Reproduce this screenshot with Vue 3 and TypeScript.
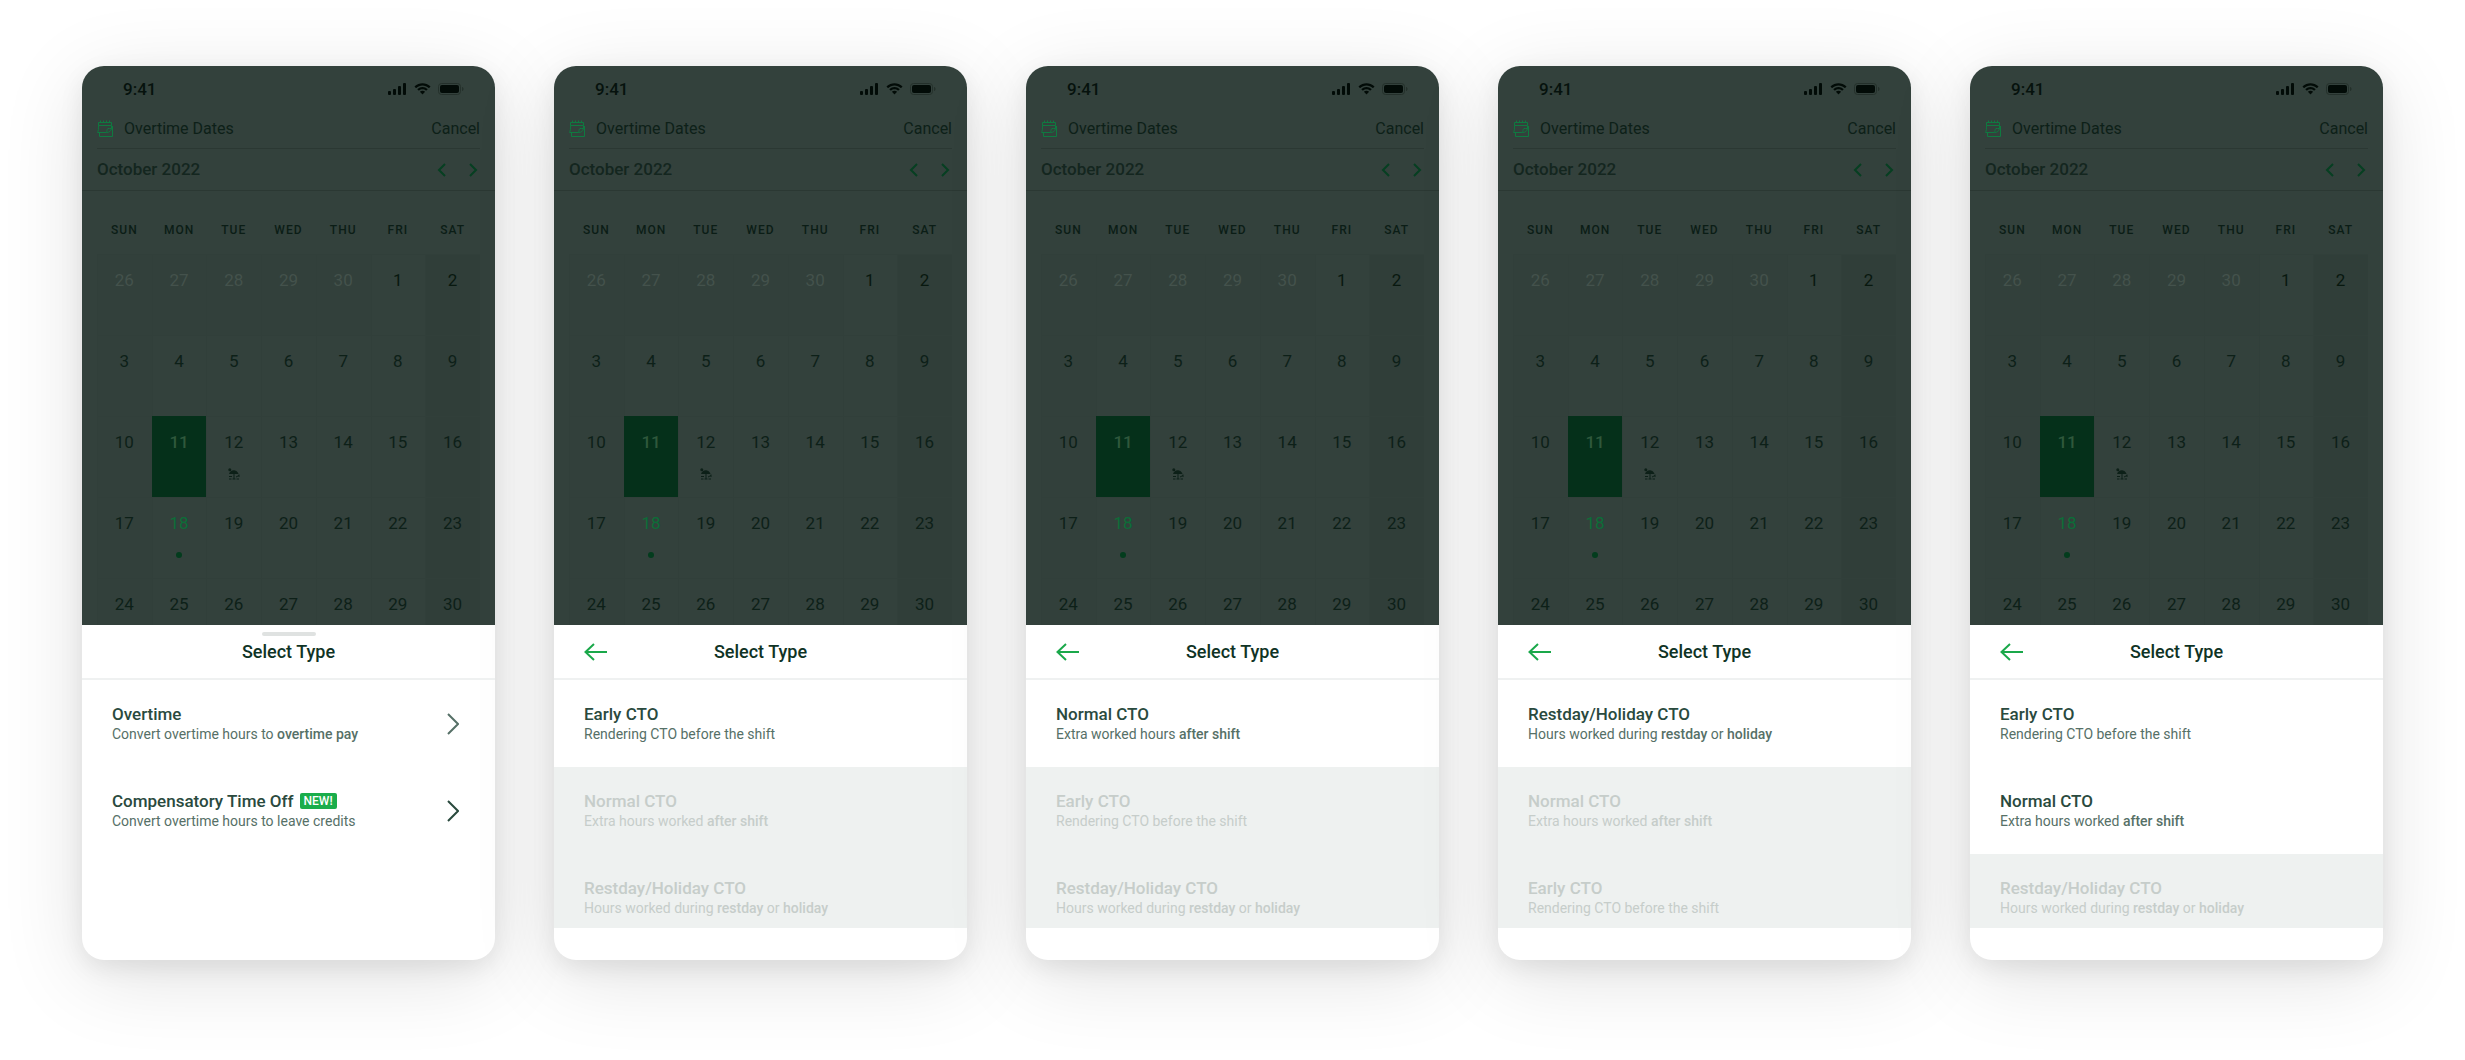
<script setup lang="ts">
interface Part {
  text: string
  strong?: boolean
}

interface Option {
  title: string
  parts: Part[]
  badge?: string
  chevron?: 'soft' | 'strong'
  disabled?: boolean
}

interface Screen {
  id: number
  back: boolean
  options: Option[]
}

interface Day {
  label: number
  outside?: boolean
  selected?: boolean
  today?: boolean
  holiday?: boolean
}

const weekdays: string[] = ['SUN', 'MON', 'TUE', 'WED', 'THU', 'FRI', 'SAT']

const weeks: Day[][] = [
  [26, 27, 28, 29, 30, 1, 2].map((label) => ({ label, outside: label > 2 })),
  [3, 4, 5, 6, 7, 8, 9].map((label) => ({ label })),
  [10, 11, 12, 13, 14, 15, 16].map((label) => ({
    label,
    selected: label === 11,
    holiday: label === 12,
  })),
  [17, 18, 19, 20, 21, 22, 23].map((label) => ({ label, today: label === 18 })),
  [24, 25, 26, 27, 28, 29, 30].map((label) => ({ label })),
]

const early: Option = {
  title: 'Early CTO',
  parts: [{ text: 'Rendering CTO before the shift' }],
}
const normal: Option = {
  title: 'Normal CTO',
  parts: [{ text: 'Extra hours worked ' }, { text: 'after shift', strong: true }],
}
const restday: Option = {
  title: 'Restday/Holiday CTO',
  parts: [
    { text: 'Hours worked during ' },
    { text: 'restday', strong: true },
    { text: ' or ' },
    { text: 'holiday', strong: true },
  ],
}
const off = (option: Option): Option => ({ ...option, disabled: true })

const screens: Screen[] = [
  {
    id: 1,
    back: false,
    options: [
      {
        title: 'Overtime',
        parts: [{ text: 'Convert overtime hours to ' }, { text: 'overtime pay', strong: true }],
        chevron: 'soft',
      },
      {
        title: 'Compensatory Time Off',
        parts: [{ text: 'Convert overtime hours to leave credits' }],
        badge: 'NEW!',
        chevron: 'strong',
      },
    ],
  },
  { id: 2, back: true, options: [early, off(normal), off(restday)] },
  {
    id: 3,
    back: true,
    options: [
      {
        title: 'Normal CTO',
        parts: [{ text: 'Extra worked hours ' }, { text: 'after shift', strong: true }],
      },
      off(early),
      off(restday),
    ],
  },
  { id: 4, back: true, options: [restday, off(normal), off(early)] },
  { id: 5, back: true, options: [early, normal, off(restday)] },
]
</script>

<template>
  <main class="board">
    <article v-for="screen in screens" :key="screen.id" class="phone">
      <section class="backdrop">
        <div class="status">
          <span class="clock">9:41</span>
          <span class="indicators">
            <svg width="19" height="12" viewBox="0 0 19 12" aria-hidden="true">
              <rect x="0" y="8" width="3" height="4" rx="1" />
              <rect x="5" y="6" width="3" height="6" rx="1" />
              <rect x="10" y="3" width="3" height="9" rx="1" />
              <rect x="15" y="0" width="3" height="12" rx="1" />
            </svg>
            <svg width="17" height="12" viewBox="0 0 17 12" aria-hidden="true">
              <path d="M8.500 2.400c2.300 0 4.500.9 6.200 2.500.1.100.3.100.4 0l1.200-1.200c.1-.1.100-.3 0-.4C12-.9 5-.9.700 3.300c-.1.100-.1.300 0 .4l1.200 1.200c.1.100.3.100.4 0C4 3.300 6.200 2.400 8.500 2.400Z" />
              <path d="M8.500 6.300c1.300 0 2.500.5 3.400 1.300.1.100.3.100.4 0l1.200-1.200c.1-.1.100-.3 0-.4-2.800-2.700-7.200-2.700-10 0-.1.100-.1.300 0 .4l1.200 1.200c.1.100.3.100.4 0 .9-.8 2.100-1.300 3.400-1.300Z" />
              <path d="M10.900 9c.1-.1.100-.3 0-.4-1.400-1.200-3.400-1.200-4.800 0-.1.100-.1.300 0 .4l2.200 2.300c.1.100.3.100.4 0Z" />
            </svg>
            <svg width="26" height="12" viewBox="0 0 26 12" aria-hidden="true">
              <rect x="0.500" y="0.500" width="22" height="11" rx="3" fill="none" stroke="#24302b" />
              <rect x="2" y="2" width="19" height="8" rx="2" />
              <path d="M24 4v4c1-.3 1.500-1.100 1.500-2S25 4.300 24 4Z" fill="#24302b" />
            </svg>
          </span>
        </div>

        <header class="topbar">
          <svg width="16" height="17" viewBox="0 0 16 17" class="note" aria-hidden="true">
            <path d="M1.500 2.500h13v3h-13zM1.500 5.500C1.500 9 1.300 11 .6 12.500h8.900c3 0 4.500-1.500 5-4v-3M15.500 6v10.500h-13v-4" />
            <path d="M3.500.5v2M6.500.5v2M9.500.5v2M12.500.5v2M9 12.500c1.500-.8.500-3.500 2-4 1-.3 2 .3 3.500 0" />
          </svg>
          <h2>Overtime Dates</h2>
          <button type="button" class="cancel">Cancel</button>
        </header>

        <div class="month">
          <h3>October 2022</h3>
          <button type="button" class="step" aria-label="Previous month">
            <svg width="10" height="14" viewBox="0 0 10 14"><path d="M8 1 2 7l6 6" /></svg>
          </button>
          <button type="button" class="step" aria-label="Next month">
            <svg width="10" height="14" viewBox="0 0 10 14"><path d="m2 1 6 6-6 6" /></svg>
          </button>
        </div>

        <table class="calendar">
          <thead>
            <tr>
              <th v-for="name in weekdays" :key="name" scope="col">{{ name }}</th>
            </tr>
          </thead>
          <tbody>
            <tr v-for="(week, w) in weeks" :key="w">
              <td
                v-for="day in week"
                :key="day.label"
                :class="{ outside: day.outside, first: w === 0, selected: day.selected, today: day.today }"
              >
                <div class="day">
                  <span>{{ day.label }}</span>
                  <i v-if="day.today" class="dot"></i>
                  <svg v-if="day.holiday" class="beach" width="12" height="12" viewBox="0 0 12 12" aria-hidden="true">
                    <circle cx="1.800" cy="1.800" r="1.500" />
                    <path d="M1 6c1-3 3.500-4.200 6-3.500 2 .6 3.200 2 3.500 3.500Z" />
                    <path d="M6 4v7M1 11h2.500M4.500 11h3M8.500 11H11M8 9l3-1.500M11 6.500V9M1 8.500h3" class="line" />
                  </svg>
                </div>
              </td>
            </tr>
          </tbody>
        </table>
      </section>

      <section class="sheet">
        <header class="sheet-head">
          <span v-if="!screen.back" class="handle"></span>
          <button v-else type="button" class="back" aria-label="Back">
            <svg width="24" height="18" viewBox="0 0 24 18"><path d="M23 9H1.500M10 1 1.500 9l8.500 8" /></svg>
          </button>
          <h1>Select Type</h1>
        </header>
        <div class="options">
          <button
            v-for="option in screen.options"
            :key="option.title"
            type="button"
            class="option"
            :disabled="option.disabled"
          >
            <span class="copy">
              <span class="title">
                {{ option.title }}
                <span v-if="option.badge" class="badge">{{ option.badge }}</span>
              </span>
              <span class="detail"><component
                :is="part.strong ? 'strong' : 'span'"
                v-for="(part, p) in option.parts"
                :key="p"
              >{{ part.text }}</component></span>
            </span>
            <svg
              v-if="option.chevron"
              :class="['chevron', option.chevron]"
              width="12"
              height="22"
              viewBox="0 0 12 22"
              aria-hidden="true"
            >
              <path d="m1 1 10 10L1 21" />
            </svg>
          </button>
        </div>
      </section>
    </article>
  </main>
</template>

<style>
body {
  margin: 0;
  background: #fff;
}
</style>

<style scoped>
.board {
  display: flex;
  gap: 59px;
  padding: 66px 82px 100px;
  font-family: Roboto, "Noto Sans", sans-serif;
}

button {
  margin: 0;
  padding: 0;
  border: 0;
  background: none;
  font: inherit;
  color: inherit;
  text-align: left;
}

h1,
h2,
h3 {
  margin: 0;
}

svg {
  display: block;
  flex: none;
}

.phone {
  flex: 1 1 0;
  min-width: 0;
  display: flex;
  flex-direction: column;
  border-radius: 22px;
  overflow: hidden;
  background: #fff;
  box-shadow: 0 16px 84px rgba(0, 0, 0, 0.12), 0 8px 24px rgba(0, 0, 0, 0.08);
}

.backdrop {
  background: #33413c;
  color: #0d2018;
}

.status {
  display: flex;
  align-items: center;
  justify-content: space-between;
  height: 46px;
  padding: 0 31px 0 41px;
}

.clock {
  font-size: 17px;
  font-weight: 500;
  color: #06120d;
}

.indicators {
  display: flex;
  gap: 7px;
  fill: #020b07;
}

.topbar {
  display: flex;
  align-items: center;
  height: 37px;
  margin: 0 15px;
  padding-bottom: 4px;
  box-sizing: border-box;
  border-bottom: 1px solid #2b3833;
}

.note {
  fill: none;
  stroke: #0f7a40;
}

.step svg {
  fill: none;
  stroke: #063f21;
  stroke-width: 2;
}

.topbar h2 {
  flex: 1;
  margin-left: 11px;
  font-size: 16px;
  font-weight: 400;
}

.cancel {
  font-size: 16px;
}

.month {
  display: flex;
  align-items: center;
  height: 41px;
  padding: 0 17px 0 15px;
  border-bottom: 1px solid #2b3833;
}

.month h3 {
  flex: 1;
  padding-bottom: 2px;
  font-size: 17px;
  font-weight: 500;
  color: #14261f;
}

.step + .step {
  margin-left: 21px;
}

.calendar {
  width: calc(100% - 30px);
  margin: 0 15px;
  table-layout: fixed;
  border-collapse: collapse;
}

.calendar th {
  height: 63px;
  padding: 14px 0 0;
  box-sizing: border-box;
  vertical-align: middle;
  font-size: 12px;
  line-height: 16px;
  font-weight: 500;
  letter-spacing: 1px;
  color: #0b1d16;
}

.calendar td {
  padding: 0;
  box-shadow: inset 1px 1px #313f3a;
  text-align: center;
}

.calendar td:first-child,
.calendar td.outside {
  background: #32403b;
}

.calendar td:last-child {
  background: #303e39;
}

.day {
  display: flex;
  flex-direction: column;
  align-items: center;
  gap: 16px;
  height: 81px;
  padding-top: 16px;
  box-sizing: border-box;
  font-size: 17px;
  line-height: 20px;
}

.calendar tr:last-child .day {
  height: 47px;
}

.calendar td.first {
  color: #08180f;
}

.calendar td.outside {
  color: #44524c;
}

.calendar td.selected {
  background: #05301a;
  box-shadow: none;
  color: #2f583c;
  font-weight: 500;
}

.calendar td.today {
  color: #0c6e38;
}

.dot {
  width: 6px;
  height: 6px;
  margin-top: 3px;
  border-radius: 50%;
  background: #033c1d;
}

.beach {
  fill: #0d2018;
}

.beach .line {
  fill: none;
  stroke: #0d2018;
}

.sheet-head {
  position: relative;
  display: flex;
  align-items: center;
  justify-content: center;
  height: 55px;
  box-sizing: border-box;
  border-bottom: 2px solid #eff1f1;
}

.sheet-head h1 {
  font-size: 18px;
  line-height: 22px;
  font-weight: 500;
  color: #0f3325;
}

.handle {
  position: absolute;
  top: 7px;
  left: 50%;
  width: 54px;
  height: 4px;
  margin-left: -27px;
  border-radius: 2px;
  background: #dfe2e1;
}

.back {
  position: absolute;
  left: 30px;
  fill: none;
  stroke: #1aa84a;
  stroke-width: 2;
}

.options {
  height: 248px;
  margin-bottom: 32px;
  overflow: hidden;
}

.option {
  display: flex;
  align-items: center;
  justify-content: space-between;
  width: 100%;
  height: 87px;
  padding: 0 36px 0 30px;
}

.option:disabled {
  background: #eef1f0;
}

.copy,
.detail {
  display: block;
}

.title {
  display: flex;
  align-items: center;
  gap: 6px;
  font-size: 17px;
  line-height: 20px;
  font-weight: 500;
  color: #2a4a3e;
}

.detail {
  font-size: 14px;
  line-height: 20px;
  color: #567067;
  white-space: pre-wrap;
}

.detail strong {
  font-weight: 500;
}

.option:disabled .title,
.option:disabled .detail {
  color: #c6cdca;
}

.badge {
  padding: 0 4px;
  border-radius: 2px;
  background: #1aad4b;
  color: #fff;
  font-size: 12px;
  line-height: 16px;
  font-weight: 500;
}

.chevron {
  fill: none;
  stroke-width: 2;
}

.chevron.soft {
  stroke: #567067;
}

.chevron.strong {
  stroke: #2a4a3e;
}
</style>
